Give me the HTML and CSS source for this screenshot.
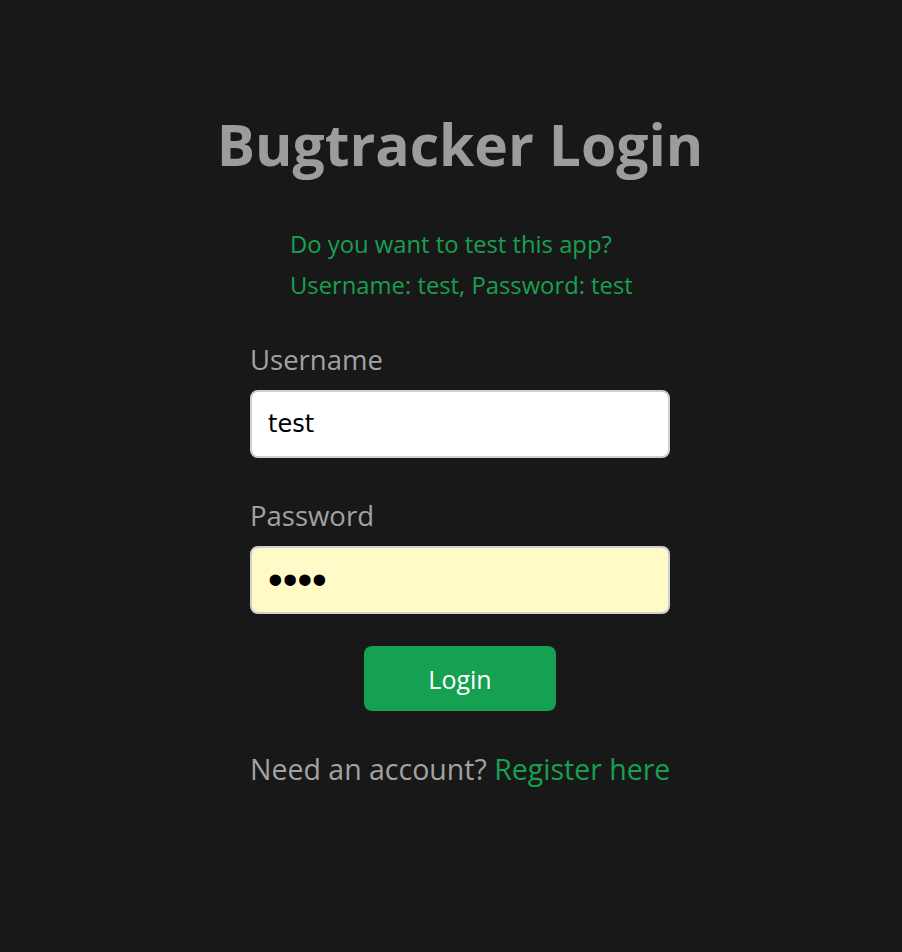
FILE: index.html
```html
<!DOCTYPE html>
<html>
<head>
<meta charset="utf-8">
<link rel="stylesheet" href="styles.css">
</head>
<body>
<main class="page">
  <h1 class="title">Bugtracker Login</h1>
  <form class="form">
    <div class="hint">
      <p>Do you want to test this app?</p>
      <p>Username: test, Password: test</p>
    </div>
    <label class="label" for="u">Username</label>
    <input class="input" id="u" type="text" value="test">
    <label class="label" for="p">Password</label>
    <input class="input input-fill" id="p" type="password" value="test">
    <div class="actions"><button type="button" class="btn">Login</button></div>
    <p class="footer">Need an account? <a class="link" href="#">Register here</a></p>
  </form>
</main>
</body>
</html>
```
FILE: styles.css
```css
html, body {
  margin: 0;
  padding: 0;
  background: #181818;
  height: 100%;
}
body {
  font-family: "Open Sans", "Noto Sans", sans-serif;
}
.page {
  display: flex;
  flex-direction: column;
  align-items: center;
  padding-left: 18px;
  padding-top: 106px;
}
.title {
  margin: 0;
  font-size: 57px;
  font-weight: 700;
  color: #9c9c9c;
  line-height: 76px;
}
.form {
  width: 420px;
  display: flex;
  flex-direction: column;
  margin-top: 42px;
}
.hint {
  padding: 0 40px;
  color: #17a050;
  font-size: 23.8px;
}
.hint p {
  margin: 0;
  line-height: 41px;
  white-space: nowrap;
}
.label {
  color: #a2a2a2;
  font-size: 27.5px;
  line-height: 36px;
  margin-top: 36px;
  margin-bottom: 12px;
}
.label + .input + .label { margin-top: 0; }
.input {
  box-sizing: border-box;
  width: 420px;
  height: 68px;
  border: 2px solid #cfcfcf;
  border-radius: 8px;
  background: #ffffff;
  padding: 0 16px;
  font-family: "DejaVu Sans", sans-serif;
  font-size: 24px;
  color: #000;
  margin-bottom: 40px;
  outline: none;
}
.input-fill {
  background: #fffac8;
  margin-bottom: 32px;
  font-family: "Liberation Sans", sans-serif;
  font-size: 42px;
}
.actions {
  display: flex;
  justify-content: center;
}
.btn {
  width: 192px;
  height: 65px;
  border: 0;
  border-radius: 8px;
  background: #15a052;
  color: #fff;
  font-family: "Open Sans", "Noto Sans", sans-serif;
  font-size: 25px;
}
.footer {
  margin: 38px 0 0;
  color: #a2a2a2;
  font-size: 28.5px;
  line-height: 40px;
  text-align: center;
  white-space: nowrap;
}
.link {
  color: #17a050;
  text-decoration: none;
}
```
